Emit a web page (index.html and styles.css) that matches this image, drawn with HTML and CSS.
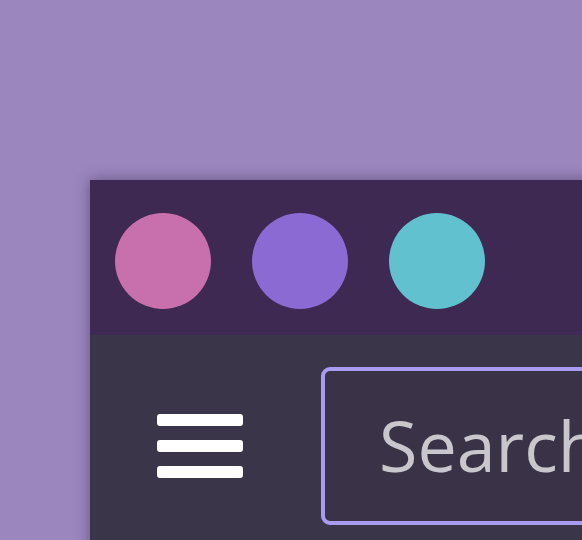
FILE: index.html
```html
<!DOCTYPE html>
<html>
<head>
<meta charset="utf-8">
<link rel="stylesheet" href="styles.css">
</head>
<body>
<div class="window">
  <div class="titlebar">
    <span class="dot pink"></span>
    <span class="dot violet"></span>
    <span class="dot teal"></span>
  </div>
  <div class="toolbar">
    <div class="menu">
      <span class="line"></span>
      <span class="line"></span>
      <span class="line"></span>
    </div>
    <div class="search"><span class="placeholder">Search</span></div>
  </div>
</div>
</body>
</html>
```
FILE: styles.css
```css
html, body {
  margin: 0;
  padding: 0;
}
body {
  background: #9b87be;
  width: 582px;
  height: 540px;
  overflow: hidden;
  padding: 180px 0 0 90px;
  box-sizing: border-box;
  font-family: "Open Sans", "Noto Sans", sans-serif;
}
.window {
  width: 700px;
  height: 500px;
  background: #3b3549;
  box-shadow: 0 0 14px rgba(40, 20, 60, 0.45);
}
.titlebar {
  height: 155px;
  background: #3e2952;
  display: flex;
  align-items: flex-start;
  gap: 41px;
  padding: 33px 0 0 25px;
  box-sizing: border-box;
}
.dot {
  width: 96px;
  height: 96px;
  border-radius: 50%;
  display: block;
}
.pink { background: #c86fae; }
.violet { background: #8b6ad3; }
.teal { background: #62c1cf; }
.toolbar {
  display: flex;
  align-items: center;
  padding: 32px 0 0 67px;
}
.menu {
  width: 86px;
  display: flex;
  flex-direction: column;
  gap: 14px;
  margin-right: 78px;
}
.line {
  display: block;
  height: 12px;
  background: #ffffff;
  border-radius: 3px;
}
.search {
  width: 420px;
  height: 158px;
  box-sizing: border-box;
  border: 4px solid #a99cf0;
  border-radius: 9px;
  background: #3a3347;
  display: flex;
  align-items: center;
  padding-left: 54px;
}
.placeholder {
  color: #c9c7cc;
  font-size: 70px;
  line-height: 1;
  margin-top: -2px;
}
```
